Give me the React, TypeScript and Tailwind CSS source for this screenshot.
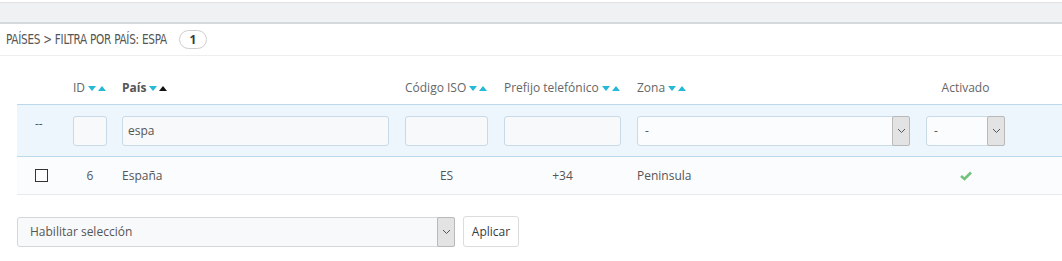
import React from "react";

const SortArrows = ({ activeUp = false }: { activeUp?: boolean }) => (
  <span className="inline-flex items-center gap-[2px] ml-[3px]">
    <svg width="8" height="5" viewBox="0 0 8 5">
      <path d="M0 0 L8 0 L4 5 Z" fill="#25b9d7" />
    </svg>
    <svg width="8" height="5" viewBox="0 0 8 5">
      <path d="M0 5 L8 5 L4 0 Z" fill={activeUp ? "#111" : "#25b9d7"} />
    </svg>
  </span>
);

const Chevron = () => (
  <svg width="9" height="6" viewBox="0 0 9 6">
    <path d="M1 1 L4.5 4.5 L8 1" fill="none" stroke="#555" strokeWidth="1" />
  </svg>
);

const FilterInput = ({ w, value = "" }: { w: string; value?: string }) => (
  <div
    className={`${w} h-[30px] rounded-[3px] border border-[#c7dae6] bg-[#f8f9fa] px-[5px] flex items-center text-[12px] text-[#555]`}
  >
    {value}
  </div>
);

const FilterSelect = ({ w, value }: { w: string; value: string }) => (
  <div
    className={`${w} h-[30px] rounded-[3px] border border-[#c7dae6] bg-[#fbfcfd] flex items-stretch text-[12px] text-[#555]`}
  >
    <div className="flex-1 flex items-center px-[7px]">{value}</div>
    <div className="w-[18px] flex items-center justify-center bg-[#e3e3e3] border border-[#b9b9b9] rounded-[2px] -my-px -mr-px">
      <Chevron />
    </div>
  </div>
);

export default function App() {
  return (
    <div className="w-[1062px] h-[261px] bg-white overflow-hidden font-['Open_Sans',sans-serif] text-[12px] text-[#555]">
      {/* top band */}
      <div className="mt-[2px] h-[22px] bg-[#eff1f2] border-t border-[#dfe1e3] border-b-2 border-b-[#d6d9db]" />

      {/* title */}
      <div className="h-[32px] flex items-center pl-[6px] border-b border-[#eeeeee]">
        <div className="w-[162px] whitespace-nowrap">
          <span className="inline-block origin-left scale-x-[0.83] font-['DejaVu_Sans_Condensed','DejaVu_Sans',sans-serif] [font-stretch:condensed] text-[14px] text-[#555] tracking-[-0.3px]">
            PAÍSES &gt; FILTRA POR PAÍS: ESPA
          </span>
        </div>
        <span className="ml-[11px] w-[28px] h-[19px] rounded-full border border-[#cfcfcf] flex items-center justify-center text-[12px] font-bold text-[#363a41]">
          1
        </span>
      </div>

      {/* table */}
      <div className="ml-[17px] mt-[16px]">
        {/* header row */}
        <div className="flex items-center h-[32px] text-[#666]">
          <div className="w-[56px]" />
          <div className="w-[49px] flex items-center">ID<SortArrows /></div>
          <div className="w-[283px] flex items-center font-bold text-[#555]">País<SortArrows activeUp /></div>
          <div className="w-[99px] flex items-center">Código ISO<SortArrows /></div>
          <div className="w-[133px] flex items-center whitespace-nowrap">Prefijo telefónico<SortArrows /></div>
          <div className="w-[289px] flex items-center">Zona<SortArrows /></div>
          <div className="w-[79px] text-center">Activado</div>
        </div>

        {/* filter row */}
        <div className="flex items-center h-[53px] bg-[#edf6fc] border-y border-[#bcd8eb]">
          <div className="w-[56px] pl-[18px] text-[#555] -mt-[14px]">--</div>
          <div className="w-[49px]"><FilterInput w="w-[34px]" /></div>
          <div className="w-[283px]"><FilterInput w="w-[267px]" value="espa" /></div>
          <div className="w-[99px]"><FilterInput w="w-[83px]" /></div>
          <div className="w-[133px]"><FilterInput w="w-[117px]" /></div>
          <div className="w-[289px]"><FilterSelect w="w-[273px]" value="-" /></div>
          <div className="w-[79px]"><FilterSelect w="w-[79px]" value="-" /></div>
        </div>

        {/* data row */}
        <div className="flex items-center h-[38px] bg-[#fbfcfe] border-b border-[#e8eaeb]">
          <div className="w-[56px] pl-[18px]">
            <div className="w-[13px] h-[13px] border border-[#333] bg-white" />
          </div>
          <div className="w-[49px]"><div className="w-[34px] text-center">6</div></div>
          <div className="w-[283px]">España</div>
          <div className="w-[99px]"><div className="w-[83px] text-center">ES</div></div>
          <div className="w-[133px]"><div className="w-[117px] text-center">+34</div></div>
          <div className="w-[289px]">Peninsula</div>
          <div className="w-[79px] flex justify-center">
            <svg width="12" height="10" viewBox="0 0 12 10">
              <path d="M1 5 L4.5 8 L11 1.5" fill="none" stroke="#72c279" strokeWidth="2.6" />
            </svg>
          </div>
        </div>

        {/* bulk actions */}
        <div className="flex items-center mt-[21px] gap-[8px]">
          <div className="w-[438px] h-[30px] rounded-[3px] border border-[#d3d8db] bg-[#f8f9fa] flex items-stretch">
            <div className="flex-1 flex items-center pl-[12px] text-[12px] text-[#555]">Habilitar selección</div>
            <div className="w-[18px] flex items-center justify-center bg-[#e3e3e3] border border-[#b9b9b9] rounded-[2px] -my-px -mr-px">
              <Chevron />
            </div>
          </div>
          <div className="w-[56px] h-[31px] rounded-[3px] border border-[#dcdcdc] bg-white flex items-center justify-center text-[12px] text-[#363a41]">
            Aplicar
          </div>
        </div>
      </div>
    </div>
  );
}
